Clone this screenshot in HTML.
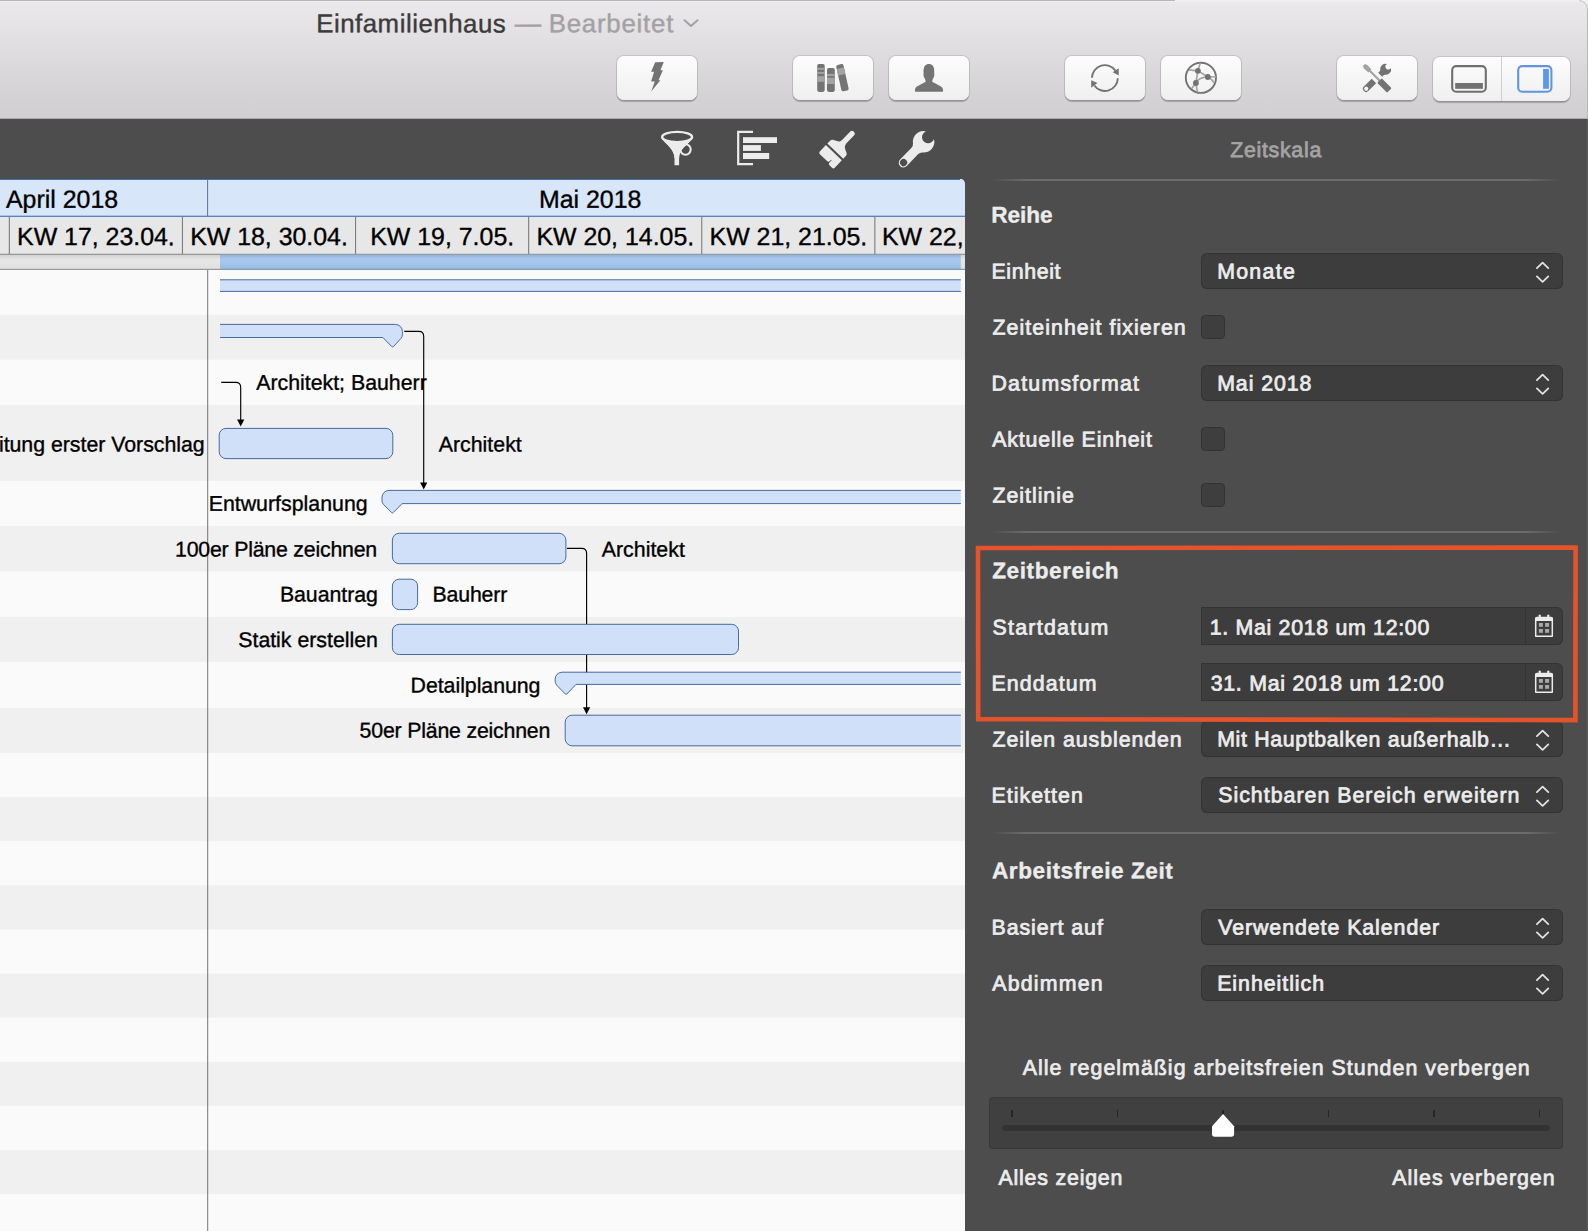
<!DOCTYPE html>
<html lang="de"><head><meta charset="utf-8"><title>Einfamilienhaus</title>
<style>
html,body{margin:0;padding:0;overflow:hidden}
body{width:1588px;height:1231px;position:relative;overflow:hidden;background:#4d4d4d;font-family:"Liberation Sans",sans-serif}
.abs{position:absolute}
.t{position:absolute;white-space:nowrap;line-height:1}
#toolbar{left:0;top:0;width:1588px;height:119px;background:linear-gradient(#ebe9eb 0,#e4e2e4 25%,#dbd9db 55%,#d4d2d4 80%,#d1cfd1 100%)}
.btn{position:absolute;top:56.2px;height:43.8px;width:79.6px;border-radius:7px;background:linear-gradient(#fdfdfd,#efefef);box-shadow:0 0 0 1px rgba(0,0,0,.11),0 1.3px 1px rgba(0,0,0,.22)}
#dark{left:0;top:119px;width:1588px;height:60px;background:#4d4d4d}
#gantt{left:0;top:179px;width:965px;height:1052px;background:#fafafa;overflow:hidden;border-radius:0 6px 0 0}
#panel{left:965px;top:119px;width:623px;height:1112px;background:#4d4d4d;color:#ececec}
.dd{position:absolute;border-radius:5px;background:#3d3d3d;box-shadow:0 0 0 1px #333,0 1px 1px rgba(0,0,0,.3)}
.cb{position:absolute;border-radius:3.5px;background:#3e3e3e;box-shadow:0 0 0 1px #323232}
.df{position:absolute;border-radius:0 5px 5px 0;background:#3d3d3d;box-shadow:0 0 0 1px #333,0 1px 1px rgba(0,0,0,.3)}
.hr{position:absolute;width:568px;height:2px;background:linear-gradient(90deg,rgba(110,110,110,0),#6c6c6c 6%,#6c6c6c 94%,rgba(110,110,110,0))}
</style></head><body>

<div id="toolbar" class="abs">
<div class="t" style="left:0;top:0;transform-origin:0 0;transform:translate(316.20px,11.30px) rotate(0.03deg);font-size:25.8px;color:#3b3b3b;letter-spacing:0.527px;-webkit-text-stroke:0.4px #3b3b3b">Einfamilienhaus</div>
<div class="t" style="left:0;top:0;transform-origin:0 0;transform:translate(514.80px,10.30px) rotate(0.03deg);font-size:26.4px;color:#a3a1a3;-webkit-text-stroke:0.4px #a3a1a3">—</div>
<div class="t" style="left:0;top:0;transform-origin:0 0;transform:translate(548.70px,11.30px) rotate(0.03deg);font-size:25.8px;color:#a3a1a3;letter-spacing:0.786px;-webkit-text-stroke:0.4px #a3a1a3">Bearbeitet</div>
<svg class="abs" style="left:682px;top:15.5px" width="20" height="14"><path d="M2.5 4.2 L9 10 L15.5 4.2" fill="none" stroke="#a3a1a3" stroke-width="2" stroke-linecap="round" stroke-linejoin="round"/></svg>
<div class="btn" style="left:617.1px"></div>
<div class="btn" style="left:793.1px"></div>
<div class="btn" style="left:889.1px"></div>
<div class="btn" style="left:1065.1px"></div>
<div class="btn" style="left:1161px"></div>
<div class="btn" style="left:1337.1px"></div>
<div class="btn" style="left:1433.1px;width:137.4px;top:56.9px"></div>
<div class="abs" style="left:1501.4px;top:57px;width:1px;height:43.6px;background:#d0d0d0"></div>
<svg class="abs" style="left:0;top:0" width="1588" height="119" viewBox="0 0 1588 119">
<polygon fill="#737373" points="655.2,62.3 663.8,62 660.4,70.2 662.9,70.2 658.5,80.2 660.4,80.2 651.2,91.6 654.8,81.5 651.1,81.5 654.1,71.7 651.1,71.7"/>
<g fill="#747474"><rect x="817.2" y="64" width="7.5" height="27.9" rx="1.8"/><rect x="827" y="68.1" width="7.8" height="23.8" rx="1.8"/><g transform="rotate(-12.5 842.5 78)"><rect x="838.8" y="64.2" width="7.4" height="27" rx="1.8"/><rect x="838.8" y="68" width="7.4" height="6.6" fill="#a3a3a3"/></g></g>
<g fill="#a3a3a3"><rect x="817.2" y="67.9" width="7.5" height="1.9"/><rect x="817.2" y="72" width="7.5" height="1.9"/><rect x="817.2" y="76.1" width="7.5" height="5.7"/><rect x="827" y="73.9" width="7.8" height="2.2"/><rect x="827" y="77.7" width="7.8" height="6.3"/></g>
<path fill="#747474" d="M 915.06,91.69 L 915.06,89.36 C 915.38,86.52 919.78,85.26 925.45,82.12 C 925.95,80.86 925.20,79.60 924.57,78.34 C 923.31,76.45 923.31,73.93 923.62,73.30 C 922.99,65.74 925.95,63.98 928.91,63.98 C 931.87,63.98 934.83,65.74 934.20,73.30 C 934.52,73.93 934.52,76.45 933.26,78.34 C 932.63,79.60 931.87,80.86 932.50,82.12 C 938.05,85.26 942.45,86.52 942.96,89.36 L 942.96,91.69 Z"/>
<g fill="none" stroke="#737373" stroke-width="1.9"><path d="M 1092.0,77.8 A 12.91 12.91 0 0 1 1115.49,70.62"/><path d="M 1117.82,78.25 A 12.91 12.91 0 0 1 1094.33,85.42"/></g>
<path fill="#737373" d="M 1118.77,68.26 L 1118.77,75.50 L 1112.66,72.36 Z"/>
<path fill="#737373" d="M 1091.19,80.23 L 1091.19,87.78 L 1097.48,83.06 Z"/>
<circle cx="1200.9" cy="77.8" r="15.1" fill="none" stroke="#737373" stroke-width="1.9"/>
<g fill="none" stroke="#a6a6a6" stroke-width="1.7"><path d="M 1197.89,70.78 L 1200.28,62.91 M 1197.89,70.78 L 1188.95,69.84 M 1197.89,70.78 L 1207.84,76.95 M 1197.89,70.78 L 1195.88,82.87 M 1207.84,76.95 L 1216.03,76.76 M 1207.84,76.95 C 1210.68,78.34 1212.56,80.23 1214.14,82.75 M 1195.88,82.87 C 1198.08,78.97 1202.49,77.08 1207.84,76.95 M 1195.88,82.87 L 1191.78,88.41 M 1195.88,82.87 L 1197.45,92.32"/></g>
<g fill="#737373"><circle cx="1197.9" cy="70.8" r="2.9"/><circle cx="1207.8" cy="77" r="2.9"/><circle cx="1195.9" cy="82.9" r="2.9"/></g>
<g transform="translate(1376.9 78) rotate(-45)"></g>
<g transform="translate(1376.9 78) rotate(45)"><path fill="#a3a3a3" d="M -18.3,-1.5 L -16,-2.5 L -9.8,-2.1 L -9.8,-1.1 L 4,-1.1 L 4,1.1 L -9.8,1.1 L -9.8,2.1 L -16,2.5 L -18.3,1.5 Z"/><rect fill="#737373" x="3.6" y="-3.2" width="14" height="6.4" rx="1"/></g>
<g transform="translate(1376.9 78) rotate(-45)"><path fill="#737373" d="M -15.3,-3.15 L -4.2,-3.15 L -4.2,3.15 L -15.3,3.15 A 3.15 3.15 0 0 1 -15.3,-3.15 Z"/><circle cx="-15.1" cy="0" r="2.05" fill="#f6f6f6"/><path fill="#737373" d="M 4.6,-2.8 L 6.8,-2.8 Q 7.8,-2.8 8.2,-3.6 A 5.4 5.4 0 0 1 17.08,-2.86 A 3 3 0 1 0 17.08,2.86 A 5.4 5.4 0 0 1 8.2,3.6 Q 7.8,2.8 6.8,2.8 L 4.6,2.8 Z"/></g>
<rect x="1452.2" y="66.1" width="33.6" height="25.7" rx="4" fill="none" stroke="#6f6f6f" stroke-width="2.1"/>
<rect x="1455.2" y="83" width="27.7" height="5.8" fill="#727272"/>
<rect x="1518.2" y="66.1" width="33.2" height="25.7" rx="4" fill="none" stroke="#6294df" stroke-width="2.1"/>
<rect x="1543.1" y="68.9" width="5.8" height="19.9" fill="#5b97ea"/>
</svg>
<div class="abs" style="left:0;top:0;width:1588px;height:1px;background:#f1eff1"></div>
<div class="abs" style="left:0;top:0;width:1174.5px;height:1px;background:#b7b5b7"></div>
<div class="abs" style="left:0;top:1px;width:1588px;height:1px;background:#f0eef0"></div>
<div class="abs" style="left:0;top:118.3px;width:1588px;height:0.7px;background:#a9a7a9"></div>
</div>
<div id="dark" class="abs"></div>
<svg class="abs" style="left:0;top:119px" width="1588" height="60" viewBox="0 119 1588 60">
<path fill="#ececec" d="M 661.5,138.5 C 668,146 674.5,150 674.5,158 L 674.5,165.2 L 679.1,165.2 L 679.1,158 C 679.1,150 686,146 692.7,138.5 C 686,144.5 668,144.5 661.5,138.5 Z"/>
<ellipse cx="677.1" cy="137" rx="15" ry="5.2" fill="none" stroke="#ececec" stroke-width="2.3"/>
<circle cx="685.5" cy="149.5" r="5.2" fill="none" stroke="#ececec" stroke-width="2"/>
<path fill="#ececec" d="M 664,141.5 L 690,141.5 L 683,148 C 680,151 679.1,154 679.1,158 L 674.5,158 C 674.5,152 670,147 664,141.5 Z"/>
<path fill="none" stroke="#ececec" stroke-width="2.2" d="M 753,131.9 L 738.2,131.9 L 738.2,164.1 L 753,164.1"/>
<g fill="#ececec"><rect x="743" y="137.2" width="34" height="5.8"/><rect x="743" y="145.1" width="17.9" height="5.8"/><rect x="743" y="153" width="26.2" height="6"/></g>
<g transform="translate(852.2 133.4) rotate(43.6)" fill="#ececec"><rect x="-2.7" y="-2.4" width="5.4" height="19" rx="2.7"/><path d="M -11,24.5 L -11,20.5 C -11,16.5 -3.2,17.5 -2.7,12 L 2.7,12 C 3.2,17.5 11,16.5 11,20.5 L 11,24.5 Z"/><path d="M -11,26.6 L 11,26.6 L 11,36.8 A 2 2 0 0 1 9,38.8 L 5.6,38.8 A 2 2 0 0 1 3.6,36.8 L 3.6,33.5 L 2.9,33.5 L 2.9,35.4 A 2 2 0 0 1 0.9,37.4 L -9,37.4 A 2 2 0 0 1 -11,35.4 Z"/></g>
<g transform="translate(903.4 162.8) rotate(-46.1)"><path fill="#ececec" d="M 0,-4.65 L 16.2,-4.65 Q 19.2,-4.65 20.9,-6.8 A 10.5 10.5 0 0 1 38.3,-5.5 A 6.1 6.1 0 1 0 38.3,5.5 A 10.5 10.5 0 0 1 20.9,6.8 Q 19.2,4.65 16.2,4.65 L 0,4.65 A 4.65 4.65 0 0 1 0,-4.65 Z"/><circle cx="0.3" cy="0" r="3.6" fill="#4d4d4d"/></g>
</svg>
<div id="gantt" class="abs"></div>
<svg class="abs" style="left:0;top:179px" width="965" height="1052" viewBox="0 179 965 1052" font-family='"Liberation Sans", sans-serif'>
<rect x="0" y="314.8" width="965" height="44.9" fill="#f0f0f0"/>
<rect x="0" y="405.0" width="965" height="75.9" fill="#f0f0f0"/>
<rect x="0" y="526.0" width="965" height="45.5" fill="#f0f0f0"/>
<rect x="0" y="617.0" width="965" height="44.8" fill="#f0f0f0"/>
<rect x="0" y="708.0" width="965" height="45.0" fill="#f0f0f0"/>
<rect x="0" y="797.1" width="965" height="44.1" fill="#f0f0f0"/>
<rect x="0" y="885.4" width="965" height="44.1" fill="#f0f0f0"/>
<rect x="0" y="973.6" width="965" height="44.1" fill="#f0f0f0"/>
<rect x="0" y="1061.8" width="965" height="44.1" fill="#f0f0f0"/>
<rect x="0" y="1150.1" width="965" height="44.1" fill="#f0f0f0"/>
<path d="M0 178.6 H959 Q965 178.6 965 184.6 V217 H0 Z" fill="#d7e6f8"/>
<path d="M0 179.3 H960" fill="none" stroke="#446ea8" stroke-width="1.5"/>
<rect x="0" y="216.6" width="965" height="37.4" fill="#e8e7e7"/>
<rect x="0" y="215.7" width="965" height="1.2" fill="#4a78bd"/>
<rect x="0" y="253.8" width="965" height="1.1" fill="#7e7e7e"/>
<rect x="207.1" y="180" width="1" height="36" fill="#5f7292"/>
<rect x="8.8" y="217" width="1.1" height="37" fill="#7d7d7d"/>
<rect x="181.9" y="217" width="1.1" height="37" fill="#7d7d7d"/>
<rect x="355.0" y="217" width="1.1" height="37" fill="#7d7d7d"/>
<rect x="528.1" y="217" width="1.1" height="37" fill="#7d7d7d"/>
<rect x="701.1999999999999" y="217" width="1.1" height="37" fill="#7d7d7d"/>
<rect x="874.3" y="217" width="1.1" height="37" fill="#7d7d7d"/>
<defs><linearGradient id="sb" x1="0" y1="0" x2="0" y2="1"><stop offset="0" stop-color="#8fb3de"/><stop offset=".3" stop-color="#a9c8ec"/><stop offset=".7" stop-color="#a3c3e9"/><stop offset="1" stop-color="#97b9e0"/></linearGradient><linearGradient id="sg" x1="0" y1="0" x2="0" y2="1"><stop offset="0" stop-color="#d2d2d2"/><stop offset=".35" stop-color="#e6e6e6"/><stop offset="1" stop-color="#e0e0e0"/></linearGradient></defs>
<rect x="0" y="254.8" width="965" height="14.2" fill="url(#sg)"/>
<rect x="220" y="254.8" width="740.8" height="14.2" fill="url(#sb)"/>
<rect x="0" y="268.8" width="220" height="1.1" fill="#8f8f8f"/>
<rect x="220" y="268.8" width="745" height="1.1" fill="#7d92ae"/>
<rect x="207.2" y="270" width="1" height="961" fill="#747474"/>
<g font-size="24.9" fill="#000" stroke="#000" stroke-width="0.35">
<text x="6" y="207.8" transform="rotate(0.03 6 207.8)">April 2018</text>
<text x="539" y="207.8" transform="rotate(0.03 539 207.8)">Mai 2018</text>
<text x="95.9" y="245.1" text-anchor="middle" transform="rotate(0.03 95.9 245.1)">KW 17, 23.04.</text>
<text x="269" y="245.1" text-anchor="middle" transform="rotate(0.03 269 245.1)">KW 18, 30.04.</text>
<text x="442.2" y="245.1" text-anchor="middle" transform="rotate(0.03 442.2 245.1)">KW 19, 7.05.</text>
<text x="615.3" y="245.1" text-anchor="middle" transform="rotate(0.03 615.3 245.1)">KW 20, 14.05.</text>
<text x="788.4" y="245.1" text-anchor="middle" transform="rotate(0.03 788.4 245.1)">KW 21, 21.05.</text>
<text x="882" y="245.1" transform="rotate(0.03 882 245.1)">KW 22, 28.05.</text>
</g>
<g fill="none" stroke="#000" stroke-width="1.15">
<path d="M404.2 331.4 H418.8 Q423.7 331.4 423.7 336.4 V483"/>
<path d="M221.2 382.4 H235.8 Q240.7 382.4 240.7 387.4 V420"/>
<path d="M567 548.3 H581.7 Q586.6 548.3 586.6 553.3 V708"/>
</g>
<g fill="#cfe0f8" stroke="#3e6499" stroke-width="0.95">
<rect x="220" y="279.8" width="740.8" height="11.6" stroke="none"/>
<path d="M220 279.8 H960.8 M220 291.4 H960.8" fill="none"/>
<path d="M220 324.4 H395.4 A7 7 0 0 1 402.4 331.4 V334.6 Q402.4 336.9 400.8 338.6 L393.4 346.6 Q392.6 347.5 391.8 346.6 L382.9 337.5 H220"/>
<rect x="219.2" y="428.4" width="173.6" height="30.2" rx="6.8"/>
<path d="M960.8 490.4 H389 A7 7 0 0 0 382 497.4 V500.6 Q382 502.9 383.6 504.6 L391.6 512.6 Q392.4 513.5 393.2 512.6 L402.1 503.6 H960.8"/>
<rect x="392.4" y="533.3" width="173.5" height="30.4" rx="6.8"/>
<rect x="392.4" y="579.2" width="25.2" height="30.4" rx="6.8"/>
<rect x="392.4" y="624.3" width="346.1" height="30.2" rx="6.8"/>
<path d="M960.8 672.2 H562 A6.8 6.8 0 0 0 555.2 679 V681.3 Q555.2 683.6 556.8 685.3 L565.3 694 Q566.1 694.9 566.9 694 L576 684.4 H960.8"/>
<path d="M960.8 715.2 H572.2 A7 7 0 0 0 565.2 722.2 V738.8 A7 7 0 0 0 572.2 745.8 H960.8"/>
</g>
<g fill="#000"><path d="M420.1 482.4 H427.3 L423.7 489.4 Z"/><path d="M237.1 419.5 H244.3 L240.7 426.5 Z"/><path d="M583 707.3 H590.2 L586.6 714.2 Z"/></g>
<g font-size="21.3" fill="#000" stroke="#000" stroke-width="0.35">
<text x="256.18" y="389.70" letter-spacing="0.006" transform="rotate(0.03 256.2 389.7)">Architekt; Bauherr</text>
<text x="-80.35" y="451.40" letter-spacing="-0.010" transform="rotate(0.03 -80.4 451.4)">Ausarbeitung erster Vorschlag</text>
<text x="438.68" y="451.40" letter-spacing="0.027" transform="rotate(0.03 438.7 451.4)">Architekt</text>
<text x="208.68" y="510.80" letter-spacing="0.025" transform="rotate(0.03 208.7 510.8)">Entwurfsplanung</text>
<text x="175.07" y="556.50" letter-spacing="-0.207" transform="rotate(0.03 175.1 556.5)">100er Pläne zeichnen</text>
<text x="601.77" y="556.60" letter-spacing="0.027" transform="rotate(0.03 601.8 556.6)">Architekt</text>
<text x="279.88" y="601.60" letter-spacing="-0.036" transform="rotate(0.03 279.9 601.6)">Bauantrag</text>
<text x="432.48" y="601.60" letter-spacing="-0.154" transform="rotate(0.03 432.5 601.6)">Bauherr</text>
<text x="238.28" y="647.00" letter-spacing="-0.006" transform="rotate(0.03 238.3 647.0)">Statik erstellen</text>
<text x="410.57" y="692.60" letter-spacing="-0.029" transform="rotate(0.03 410.6 692.6)">Detailplanung</text>
<text x="359.57" y="737.60" letter-spacing="-0.188" transform="rotate(0.03 359.6 737.6)">50er Pläne zeichnen</text>
</g>
</svg>
<div id="panel" class="abs"></div>
<div class="t" style="left:0;top:0;transform-origin:0 0;transform:translate(1230.17px,139.90px) rotate(0.03deg);font-size:21.3px;color:#a4a4a4;letter-spacing:0.734px;-webkit-text-stroke:0.75px #a4a4a4;">Zeitskala</div>
<div class="hr" style="left:992px;top:178.7px"></div>
<div class="t" style="left:0;top:0;transform-origin:0 0;transform:translate(991.17px,204.40px) rotate(0.03deg);font-size:22.6px;color:#ececec;font-weight:bold;letter-spacing:-0.003px;-webkit-text-stroke:0.35px #ececec;">Reihe</div>
<div class="dd" style="left:1202.3px;top:254.2px;width:359.4px;height:33.8px"><svg class="abs" style="right:6px;top:0" width="28" height="36" viewBox="0 0 28 36"><path d="M8.9 14.1 L14.6 8.7 L20.3 14.1 M8.9 22.4 L14.6 27.8 L20.3 22.4" fill="none" stroke="#e2e2e2" stroke-width="1.8" stroke-linecap="round" stroke-linejoin="round"/></svg></div>
<div class="t" style="left:0;top:0;transform-origin:0 0;transform:translate(991.48px,261.50px) rotate(0.03deg);font-size:21.3px;color:#ececec;letter-spacing:0.658px;-webkit-text-stroke:0.75px #ececec;">Einheit</div>
<div class="t" style="left:0;top:0;transform-origin:0 0;transform:translate(1217.17px,261.50px) rotate(0.03deg);font-size:21.3px;color:#ececec;letter-spacing:1.312px;-webkit-text-stroke:0.75px #ececec;">Monate</div>
<div class="cb" style="left:1202.1px;top:316.0px;width:21.9px;height:22px"></div>
<div class="t" style="left:0;top:0;transform-origin:0 0;transform:translate(992.48px,317.50px) rotate(0.03deg);font-size:21.3px;color:#ececec;letter-spacing:1.072px;-webkit-text-stroke:0.75px #ececec;">Zeiteinheit fixieren</div>
<div class="dd" style="left:1202.3px;top:366.2px;width:359.4px;height:33.8px"><svg class="abs" style="right:6px;top:0" width="28" height="36" viewBox="0 0 28 36"><path d="M8.9 14.1 L14.6 8.7 L20.3 14.1 M8.9 22.4 L14.6 27.8 L20.3 22.4" fill="none" stroke="#e2e2e2" stroke-width="1.8" stroke-linecap="round" stroke-linejoin="round"/></svg></div>
<div class="t" style="left:0;top:0;transform-origin:0 0;transform:translate(991.48px,373.50px) rotate(0.03deg);font-size:21.3px;color:#ececec;letter-spacing:1.249px;-webkit-text-stroke:0.75px #ececec;">Datumsformat</div>
<div class="t" style="left:0;top:0;transform-origin:0 0;transform:translate(1217.17px,373.50px) rotate(0.03deg);font-size:21.3px;color:#ececec;letter-spacing:0.941px;-webkit-text-stroke:0.75px #ececec;">Mai 2018</div>
<div class="cb" style="left:1202.1px;top:428.0px;width:21.9px;height:22px"></div>
<div class="t" style="left:0;top:0;transform-origin:0 0;transform:translate(992.28px,429.50px) rotate(0.03deg);font-size:21.3px;color:#ececec;letter-spacing:0.851px;-webkit-text-stroke:0.75px #ececec;">Aktuelle Einheit</div>
<div class="cb" style="left:1202.1px;top:484.0px;width:21.9px;height:22px"></div>
<div class="t" style="left:0;top:0;transform-origin:0 0;transform:translate(992.48px,485.50px) rotate(0.03deg);font-size:21.3px;color:#ececec;letter-spacing:0.989px;-webkit-text-stroke:0.75px #ececec;">Zeitlinie</div>
<div class="hr" style="left:992px;top:530.8px"></div>
<div class="t" style="left:0;top:0;transform-origin:0 0;transform:translate(992.17px,560.30px) rotate(0.03deg);font-size:22.6px;color:#ececec;font-weight:bold;letter-spacing:0.591px;-webkit-text-stroke:0.35px #ececec;">Zeitbereich</div>
<div class="df" style="left:1202.3px;width:359.4px;top:607.8px;height:36.4px"><div class="abs" style="left:322.3px;top:0;width:1px;height:36.4px;background:#333"></div><svg class="abs" style="right:7.5px;top:6px" width="20" height="24" viewBox="0 0 20 24"><path d="M1.7 4.5 H18.3 V22.3 H1.7 Z" fill="none" stroke="#ececec" stroke-width="1.5" stroke-linejoin="round"/><path d="M1 7 V4.6 Q1 2.8 2.8 2.8 H17.2 Q19 2.8 19 4.6 V7 Z" fill="#ececec"/><rect x="4.6" y="0.7" width="2.2" height="4" fill="#ececec"/><rect x="13.2" y="0.7" width="2.2" height="4" fill="#ececec"/><g fill="#a9a9a9"><rect x="4.9" y="9" width="4" height="3.8"/><rect x="11.1" y="9" width="4" height="3.8"/><rect x="4.9" y="15" width="4" height="3.8"/><rect x="11.1" y="15" width="4" height="3.8"/></g></svg></div>
<div class="t" style="left:0;top:0;transform-origin:0 0;transform:translate(992.48px,617.50px) rotate(0.03deg);font-size:21.3px;color:#ececec;letter-spacing:1.303px;-webkit-text-stroke:0.75px #ececec;">Startdatum</div>
<div class="t" style="left:0;top:0;transform-origin:0 0;transform:translate(1209.67px,617.60px) rotate(0.03deg);font-size:21.3px;color:#ececec;letter-spacing:0.715px;-webkit-text-stroke:0.75px #ececec;">1. Mai 2018 um 12:00</div>
<div class="df" style="left:1202.3px;width:359.4px;top:663.8px;height:36.4px"><div class="abs" style="left:322.3px;top:0;width:1px;height:36.4px;background:#333"></div><svg class="abs" style="right:7.5px;top:6px" width="20" height="24" viewBox="0 0 20 24"><path d="M1.7 4.5 H18.3 V22.3 H1.7 Z" fill="none" stroke="#ececec" stroke-width="1.5" stroke-linejoin="round"/><path d="M1 7 V4.6 Q1 2.8 2.8 2.8 H17.2 Q19 2.8 19 4.6 V7 Z" fill="#ececec"/><rect x="4.6" y="0.7" width="2.2" height="4" fill="#ececec"/><rect x="13.2" y="0.7" width="2.2" height="4" fill="#ececec"/><g fill="#a9a9a9"><rect x="4.9" y="9" width="4" height="3.8"/><rect x="11.1" y="9" width="4" height="3.8"/><rect x="4.9" y="15" width="4" height="3.8"/><rect x="11.1" y="15" width="4" height="3.8"/></g></svg></div>
<div class="t" style="left:0;top:0;transform-origin:0 0;transform:translate(991.48px,673.50px) rotate(0.03deg);font-size:21.3px;color:#ececec;letter-spacing:1.144px;-webkit-text-stroke:0.75px #ececec;">Enddatum</div>
<div class="t" style="left:0;top:0;transform-origin:0 0;transform:translate(1210.67px,673.50px) rotate(0.03deg);font-size:21.3px;color:#ececec;letter-spacing:0.752px;-webkit-text-stroke:0.75px #ececec;">31. Mai 2018 um 12:00</div>
<div class="dd" style="left:1202.3px;top:722.2px;width:359.4px;height:33.8px"><svg class="abs" style="right:6px;top:0" width="28" height="36" viewBox="0 0 28 36"><path d="M8.9 14.1 L14.6 8.7 L20.3 14.1 M8.9 22.4 L14.6 27.8 L20.3 22.4" fill="none" stroke="#e2e2e2" stroke-width="1.8" stroke-linecap="round" stroke-linejoin="round"/></svg></div>
<div class="t" style="left:0;top:0;transform-origin:0 0;transform:translate(992.48px,729.50px) rotate(0.03deg);font-size:21.3px;color:#ececec;letter-spacing:0.946px;-webkit-text-stroke:0.75px #ececec;">Zeilen ausblenden</div>
<div class="t" style="left:0;top:0;transform-origin:0 0;transform:translate(1217.17px,729.30px) rotate(0.03deg);font-size:21.3px;color:#ececec;letter-spacing:0.67px;-webkit-text-stroke:0.75px #ececec;">Mit Hauptbalken außerhalb…</div>
<div class="dd" style="left:1202.3px;top:778.2px;width:359.4px;height:33.8px"><svg class="abs" style="right:6px;top:0" width="28" height="36" viewBox="0 0 28 36"><path d="M8.9 14.1 L14.6 8.7 L20.3 14.1 M8.9 22.4 L14.6 27.8 L20.3 22.4" fill="none" stroke="#e2e2e2" stroke-width="1.8" stroke-linecap="round" stroke-linejoin="round"/></svg></div>
<div class="t" style="left:0;top:0;transform-origin:0 0;transform:translate(991.48px,785.50px) rotate(0.03deg);font-size:21.3px;color:#ececec;letter-spacing:1.053px;-webkit-text-stroke:0.75px #ececec;">Etiketten</div>
<div class="t" style="left:0;top:0;transform-origin:0 0;transform:translate(1218.17px,785.10px) rotate(0.03deg);font-size:21.3px;color:#ececec;letter-spacing:1.031px;-webkit-text-stroke:0.75px #ececec;">Sichtbaren Bereich erweitern</div>
<div class="hr" style="left:992px;top:831.5px"></div>
<div class="t" style="left:0;top:0;transform-origin:0 0;transform:translate(991.98px,860.30px) rotate(0.03deg);font-size:22.6px;color:#ececec;font-weight:bold;letter-spacing:0.548px;-webkit-text-stroke:0.35px #ececec;">Arbeitsfreie Zeit</div>
<div class="dd" style="left:1202.3px;top:910.2px;width:359.4px;height:33.8px"><svg class="abs" style="right:6px;top:0" width="28" height="36" viewBox="0 0 28 36"><path d="M8.9 14.1 L14.6 8.7 L20.3 14.1 M8.9 22.4 L14.6 27.8 L20.3 22.4" fill="none" stroke="#e2e2e2" stroke-width="1.8" stroke-linecap="round" stroke-linejoin="round"/></svg></div>
<div class="t" style="left:0;top:0;transform-origin:0 0;transform:translate(991.48px,917.50px) rotate(0.03deg);font-size:21.3px;color:#ececec;letter-spacing:0.956px;-webkit-text-stroke:0.75px #ececec;">Basiert auf</div>
<div class="t" style="left:0;top:0;transform-origin:0 0;transform:translate(1218.17px,917.50px) rotate(0.03deg);font-size:21.3px;color:#ececec;letter-spacing:0.961px;-webkit-text-stroke:0.75px #ececec;">Verwendete Kalender</div>
<div class="dd" style="left:1202.3px;top:966.2px;width:359.4px;height:33.8px"><svg class="abs" style="right:6px;top:0" width="28" height="36" viewBox="0 0 28 36"><path d="M8.9 14.1 L14.6 8.7 L20.3 14.1 M8.9 22.4 L14.6 27.8 L20.3 22.4" fill="none" stroke="#e2e2e2" stroke-width="1.8" stroke-linecap="round" stroke-linejoin="round"/></svg></div>
<div class="t" style="left:0;top:0;transform-origin:0 0;transform:translate(992.28px,973.50px) rotate(0.03deg);font-size:21.3px;color:#ececec;letter-spacing:1.214px;-webkit-text-stroke:0.75px #ececec;">Abdimmen</div>
<div class="t" style="left:0;top:0;transform-origin:0 0;transform:translate(1217.17px,973.50px) rotate(0.03deg);font-size:21.3px;color:#ececec;letter-spacing:0.982px;-webkit-text-stroke:0.75px #ececec;">Einheitlich</div>
<div class="t" style="left:0;top:0;transform-origin:0 0;transform:translate(1022.68px,1057.70px) rotate(0.03deg);font-size:21.3px;color:#ececec;letter-spacing:1.062px;-webkit-text-stroke:0.75px #ececec;">Alle regelmäßig arbeitsfreien Stunden verbergen</div>
<div class="abs" style="left:990.4px;top:1097.7px;width:571.2px;height:50px;border-radius:3px;background:#404040;box-shadow:0 0 0 1px #383838"></div>
<div class="abs" style="left:1011.3px;top:1109.5px;width:1.4px;height:7px;background:#262626"></div>
<div class="abs" style="left:1116.9px;top:1109.5px;width:1.4px;height:7px;background:#262626"></div>
<div class="abs" style="left:1222.4px;top:1109.5px;width:1.4px;height:7px;background:#262626"></div>
<div class="abs" style="left:1327.9px;top:1109.5px;width:1.4px;height:7px;background:#262626"></div>
<div class="abs" style="left:1433.4px;top:1109.5px;width:1.4px;height:7px;background:#262626"></div>
<div class="abs" style="left:1538.9px;top:1109.5px;width:1.4px;height:7px;background:#262626"></div>
<div class="abs" style="left:1001.7px;top:1125.4px;width:548.3px;height:5.6px;border-radius:3px;background:#333"></div>
<svg class="abs" style="left:1210px;top:1110px" width="26" height="30" viewBox="1210 1110 26 30"><path d="M1223.05 1114 L1234.1 1126.2 V1134 Q1234.1 1136.8 1231.3 1136.8 H1214.8 Q1212 1136.8 1212 1134 V1126.2 Z" fill="#fff"/></svg>
<div class="t" style="left:0;top:0;transform-origin:0 0;transform:translate(998.48px,1167.80px) rotate(0.03deg);font-size:21.3px;color:#ececec;letter-spacing:0.824px;-webkit-text-stroke:0.75px #ececec;">Alles zeigen</div>
<div class="t" style="left:0;top:0;transform-origin:0 0;transform:translate(1392.38px,1167.80px) rotate(0.03deg);font-size:21.3px;color:#ececec;letter-spacing:1.016px;-webkit-text-stroke:0.75px #ececec;">Alles verbergen</div>
<svg class="abs" style="left:965px;top:540px" width="623" height="190" viewBox="965 540 623 190"><path d="M978 548 L1575.6 547.6 L1575.4 720.1 L978.2 719.2 Z" fill="none" stroke="#e4532c" stroke-width="4.6" stroke-linejoin="miter"/></svg>
<div class="abs" style="left:1587px;top:119px;width:1px;height:1112px;background:#5e5e5e"></div>
<div class="abs" style="left:1587px;top:8px;width:1px;height:111px;background:#b9b7b9"></div>
<svg class="abs" style="left:1576px;top:0" width="12" height="12" viewBox="0 0 12 12"><path d="M3 0 H12 V10 C12 4 9 0.8 3 0 Z" fill="#f3f1f3"/><path d="M3 0.6 C8.5 1.2 11.4 4.5 11.5 10" fill="none" stroke="#c4c2c4" stroke-width="1"/></svg>
</body></html>
